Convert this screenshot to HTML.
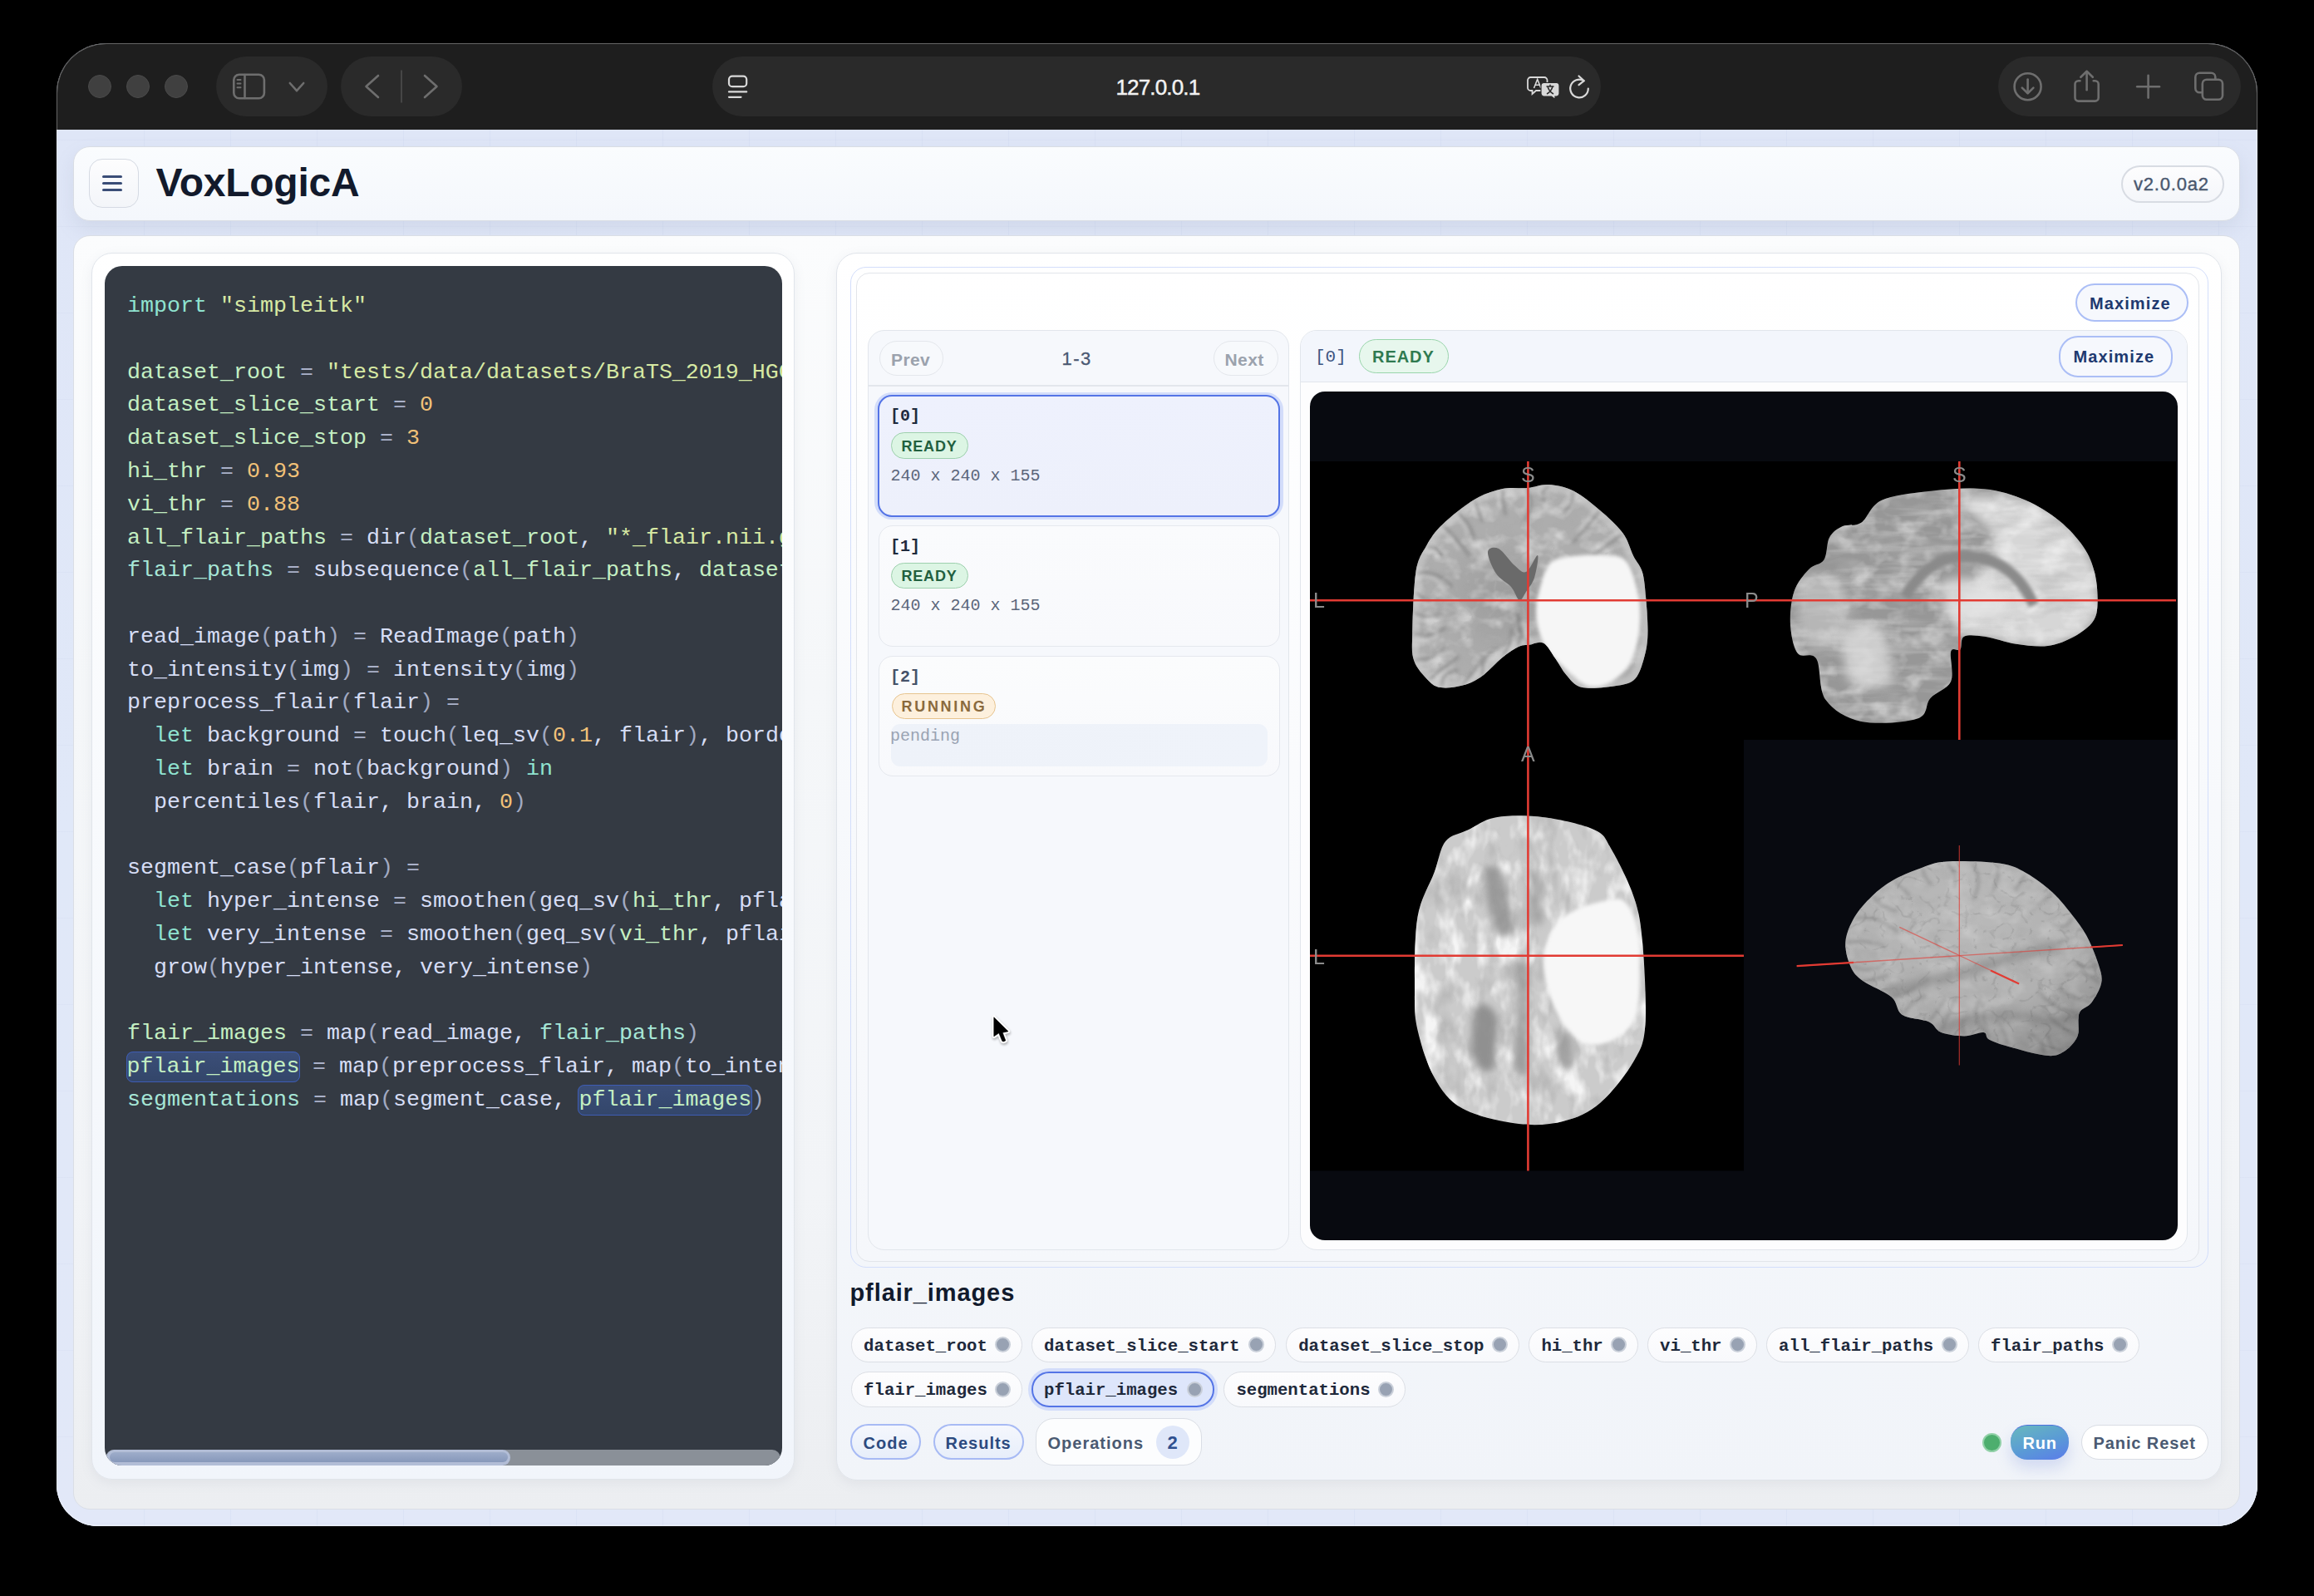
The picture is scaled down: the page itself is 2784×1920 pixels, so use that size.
<!DOCTYPE html>
<html><head><meta charset="utf-8">
<style>
html,body{margin:0;padding:0;}
body{width:2784px;height:1920px;background:#000;position:relative;overflow:hidden;font-family:"Liberation Sans",sans-serif;}
.a{position:absolute;box-sizing:border-box;}
#win{position:absolute;left:68px;top:52px;width:2648px;height:1784px;border-radius:60px 60px 50px 50px;overflow:hidden;background:#dfe6f6;}
#inner{position:absolute;left:-68px;top:-52px;width:2784px;height:1920px;}
#titlebar{position:absolute;left:68px;top:52px;width:2648px;height:104px;background:#1e1e1e;}
#content{position:absolute;left:68px;top:156px;width:2648px;height:1680px;
 background-color:#e0e8f8;background-image:linear-gradient(90deg,rgba(140,160,205,0.08) 1px,transparent 1px),linear-gradient(180deg,rgba(140,160,205,0.06) 1px,transparent 1px),linear-gradient(180deg,#dfe6f7 0%,#e0e8f8 50%,#e2e8f8 100%);background-size:104px 104px,104px 104px,100% 100%;background-position:1px 12px,1px 12px,0 0;}
#winborder{position:absolute;left:68px;top:52px;width:2648px;height:1784px;border-radius:60px 60px 50px 50px;box-sizing:border-box;border:1.8px solid rgba(255,255,255,0.32);pointer-events:none;}
.pill{position:absolute;background:#2a2a2a;border-radius:36px;}
.tl{position:absolute;width:28px;height:28px;border-radius:50%;background:#404040;box-sizing:border-box;border:1px solid #4a4a4a;}
.mono{font-family:"Liberation Mono",monospace;}
.t{position:absolute;white-space:pre;line-height:1;}

#code{position:absolute;left:27px;top:29.2px;font-family:"Liberation Mono",monospace;font-size:26.67px;line-height:39.77px;color:#d4dbf3;}
.cl{height:39.77px;white-space:pre;}
#code .k{color:#8fe3d0}
#code .s{color:#d7e9a3}
#code .n{color:#f1c178}
#code .o{color:#aab1c9}
#code .f{color:#d6ddf5}
#code .p{color:#a2aac2}
#code .v{color:#c4efc2}
#code .tv{color:#a6e6d6}
#code .hl{background:linear-gradient(180deg,#3b4e78,#33466a);border:1.5px solid #3e5cb4;border-radius:8px;margin:0 -1.5px;padding:2px 0 3px;}
</style></head>
<body>
<div id="win"><div id="inner">
  <div id="titlebar"></div>
  <div id="content"></div>
  <!-- traffic lights -->
  <div class="tl" style="left:106px;top:90px"></div>
  <div class="tl" style="left:152px;top:90px"></div>
  <div class="tl" style="left:198px;top:90px"></div>
  <!-- pills -->
  <div class="pill" style="left:260px;top:68px;width:134px;height:72px"></div>
  <div class="pill" style="left:410px;top:68px;width:146px;height:72px"></div>
  <div class="pill" style="left:857px;top:68px;width:1069px;height:72px"></div>
  <div class="pill" style="left:2404px;top:68px;width:292px;height:72px"></div>
  <div class="t" style="left:1342.5px;top:91.5px;font-size:26px;color:#f2f2f2;letter-spacing:-0.85px;-webkit-text-stroke:0.45px #f2f2f2;">127.0.0.1</div>

  <!-- header card -->
  <div class="a" id="hdr" style="left:88px;top:176px;width:2607px;height:90px;border-radius:20px;border:1.5px solid #d9dde4;background:linear-gradient(180deg,#fafcfe,#f4f7fc);box-shadow:0 10px 22px rgba(125,138,165,0.15);"></div>

  <!-- main card -->
  <div class="a" id="main" style="left:88px;top:283px;width:2607px;height:1533px;border-radius:20px;border:1.5px solid #dadee5;background:linear-gradient(180deg,#fbfcfd 0%,#f5f7f9 35%,#f2f4f7 75%,#eceef1 100%);"></div>

  <!-- editor panel -->
  <div class="a" style="left:110px;top:304px;width:846px;height:1476px;border-radius:25px;border:1.5px solid #e1e5eb;background:linear-gradient(180deg,#ffffff 0%,#f8fafd 45%,#f1f5fb 100%);box-shadow:0 4px 14px rgba(120,130,150,0.10);"></div>
  <div class="a" id="editor" style="left:126px;top:320px;width:815px;height:1443px;border-radius:21px;background:#343a43;overflow:hidden;"><div id="code">
<div class="cl"><span class="k">import</span><span class="f"> </span><span class="s">&quot;simpleitk&quot;</span></div>
<div class="cl"></div>
<div class="cl"><span class="v">dataset_root</span><span class="o"> = </span><span class="s">&quot;tests/data/datasets/BraTS_2019_HGG/&quot;</span></div>
<div class="cl"><span class="v">dataset_slice_start</span><span class="o"> = </span><span class="n">0</span></div>
<div class="cl"><span class="v">dataset_slice_stop</span><span class="o"> = </span><span class="n">3</span></div>
<div class="cl"><span class="v">hi_thr</span><span class="o"> = </span><span class="n">0.93</span></div>
<div class="cl"><span class="v">vi_thr</span><span class="o"> = </span><span class="n">0.88</span></div>
<div class="cl"><span class="v">all_flair_paths</span><span class="o"> = </span><span class="f">dir</span><span class="p">(</span><span class="v">dataset_root</span><span class="f">, </span><span class="s">&quot;*_flair.nii.gz&quot;)</span></div>
<div class="cl"><span class="tv">flair_paths</span><span class="o"> = </span><span class="f">subsequence</span><span class="p">(</span><span class="v">all_flair_paths</span><span class="f">, </span><span class="v">dataset_slice_start, dataset_slice_stop)</span></div>
<div class="cl"></div>
<div class="cl"><span class="f">read_image</span><span class="p">(</span><span class="f">path</span><span class="p">)</span><span class="o"> = </span><span class="f">ReadImage</span><span class="p">(</span><span class="f">path</span><span class="p">)</span></div>
<div class="cl"><span class="f">to_intensity</span><span class="p">(</span><span class="f">img</span><span class="p">)</span><span class="o"> = </span><span class="f">intensity</span><span class="p">(</span><span class="f">img</span><span class="p">)</span></div>
<div class="cl"><span class="f">preprocess_flair</span><span class="p">(</span><span class="f">flair</span><span class="p">)</span><span class="o"> =</span></div>
<div class="cl"><span class="f">  </span><span class="k">let</span><span class="f"> background</span><span class="o"> = </span><span class="f">touch</span><span class="p">(</span><span class="f">leq_sv</span><span class="p">(</span><span class="n">0.1</span><span class="f">, flair</span><span class="p">)</span><span class="f">, border)</span></div>
<div class="cl"><span class="f">  </span><span class="k">let</span><span class="f"> brain</span><span class="o"> = </span><span class="f">not</span><span class="p">(</span><span class="f">background</span><span class="p">)</span><span class="f"> </span><span class="k">in</span></div>
<div class="cl"><span class="f">  percentiles</span><span class="p">(</span><span class="f">flair, brain, </span><span class="n">0</span><span class="p">)</span></div>
<div class="cl"></div>
<div class="cl"><span class="f">segment_case</span><span class="p">(</span><span class="f">pflair</span><span class="p">)</span><span class="o"> =</span></div>
<div class="cl"><span class="f">  </span><span class="k">let</span><span class="f"> hyper_intense</span><span class="o"> = </span><span class="f">smoothen</span><span class="p">(</span><span class="f">geq_sv</span><span class="p">(</span><span class="v">hi_thr</span><span class="f">, pflair), 5.0)</span></div>
<div class="cl"><span class="f">  </span><span class="k">let</span><span class="f"> very_intense</span><span class="o"> = </span><span class="f">smoothen</span><span class="p">(</span><span class="f">geq_sv</span><span class="p">(</span><span class="v">vi_thr</span><span class="f">, pflair), 2.0)</span></div>
<div class="cl"><span class="f">  grow</span><span class="p">(</span><span class="f">hyper_intense, very_intense</span><span class="p">)</span></div>
<div class="cl"></div>
<div class="cl"><span class="v">flair_images</span><span class="o"> = </span><span class="f">map</span><span class="p">(</span><span class="f">read_image, </span><span class="tv">flair_paths</span><span class="p">)</span></div>
<div class="cl"><span class="hl v">pflair_images</span><span class="o"> = </span><span class="f">map</span><span class="p">(</span><span class="f">preprocess_flair, map</span><span class="p">(</span><span class="f">to_intensity, flair_images))</span></div>
<div class="cl"><span class="tv">segmentations</span><span class="o"> = </span><span class="f">map</span><span class="p">(</span><span class="f">segment_case, </span><span class="hl v">pflair_images</span><span class="p">)</span></div>
</div>
<div class="a" style="left:1px;top:1424px;width:812px;height:19px;background:#8a9098;border-radius:10px 10px 0 0;"></div>
<div class="a" style="left:2px;top:1423.5px;width:486px;height:19px;background:#b2bdd6;border-radius:10px;"></div>
<div class="a" style="left:5.5px;top:1427px;width:479px;height:12px;background:linear-gradient(180deg,#9eadca,#8798ba);border-radius:6px;"></div>
</div>

  <!-- right card -->
  <div class="a" style="left:1006px;top:304px;width:1667px;height:1477px;border-radius:25px;border:1.5px solid #e0e4ea;background:linear-gradient(180deg,#ffffff 0%,#f7f9fc 45%,#f1f4f9 100%);box-shadow:0 4px 14px rgba(120,130,150,0.10);"></div>
  <div class="a" style="left:1023px;top:321px;width:1634px;height:1204px;border-radius:19px;border:1.5px solid #d3defb;"></div>
  <div class="a" style="left:1030px;top:328px;width:1616px;height:1190px;border-radius:16px;border:1.5px solid #e2e5ea;background:linear-gradient(180deg,#ffffff 0%,#fafbfd 50%,#f5f7fb 100%);"></div>

  <!-- list panel -->
  <div class="a" style="left:1044px;top:397px;width:507px;height:1107px;border-radius:20px;border:1px solid #e2e6ec;background:#f6f8fc;"></div>
  <!-- result panel -->
  <div class="a" style="left:1564px;top:397px;width:1068px;height:1107px;border-radius:20px;border:1px solid #e2e6ec;background:#fdfdfe;"></div>
  <svg class="a" style="left:1576px;top:471px;" width="1044" height="1021" viewBox="1576 471 1044 1021">
<defs>
<filter id="nz" x="1576" y="471" width="1044" height="1021" filterUnits="userSpaceOnUse">
 <feTurbulence type="fractalNoise" baseFrequency="0.035 0.045" numOctaves="3" seed="4"/>
 <feColorMatrix type="matrix" values="0 0 0 0 1  0 0 0 0 1  0 0 0 0 1  2.8 0 0 0 -1.25"/>
</filter>
<filter id="nzd" x="1576" y="471" width="1044" height="1021" filterUnits="userSpaceOnUse">
 <feTurbulence type="fractalNoise" baseFrequency="0.04 0.05" numOctaves="3" seed="11"/>
 <feColorMatrix type="matrix" values="0 0 0 0 0.4  0 0 0 0 0.4  0 0 0 0 0.4  2.6 0 0 0 -1.3"/>
</filter>
<filter id="sul" x="1576" y="471" width="1044" height="1021" filterUnits="userSpaceOnUse">
 <feTurbulence type="turbulence" baseFrequency="0.03" numOctaves="2" seed="21"/>
 <feColorMatrix type="matrix" values="0 0 0 0 0.42  0 0 0 0 0.42  0 0 0 0 0.42  -7 0 0 0 0.95"/>
</filter>
<filter id="gyr" x="1576" y="471" width="1044" height="1021" filterUnits="userSpaceOnUse">
 <feTurbulence type="turbulence" baseFrequency="0.028" numOctaves="2" seed="8"/>
 <feColorMatrix type="matrix" values="0 0 0 0 0.9  0 0 0 0 0.9  0 0 0 0 0.9  -5 0 0 0 0.9"/>
</filter>
<filter id="strH" x="1576" y="471" width="1044" height="1021" filterUnits="userSpaceOnUse">
 <feTurbulence type="fractalNoise" baseFrequency="0.012 0.09" numOctaves="3" seed="5"/>
 <feColorMatrix type="matrix" values="0 0 0 0 1  0 0 0 0 1  0 0 0 0 1  3.2 0 0 0 -1.45"/>
</filter>
<filter id="strHd" x="1576" y="471" width="1044" height="1021" filterUnits="userSpaceOnUse">
 <feTurbulence type="fractalNoise" baseFrequency="0.02 0.05" numOctaves="3" seed="9"/>
 <feColorMatrix type="matrix" values="0 0 0 0 0.45  0 0 0 0 0.45  0 0 0 0 0.45  3.0 0 0 0 -1.5"/>
</filter>
<filter id="strV" x="1576" y="471" width="1044" height="1021" filterUnits="userSpaceOnUse">
 <feTurbulence type="fractalNoise" baseFrequency="0.045 0.025" numOctaves="3" seed="13"/>
 <feColorMatrix type="matrix" values="0 0 0 0 1  0 0 0 0 1  0 0 0 0 1  3.2 0 0 0 -1.4"/>
</filter>
<filter id="strVd" x="1576" y="471" width="1044" height="1021" filterUnits="userSpaceOnUse">
 <feTurbulence type="fractalNoise" baseFrequency="0.04 0.022" numOctaves="3" seed="17"/>
 <feColorMatrix type="matrix" values="0 0 0 0 0.42  0 0 0 0 0.42  0 0 0 0 0.42  3.2 0 0 0 -1.55"/>
</filter>
<filter id="bl2" x="1576" y="471" width="1044" height="1021" filterUnits="userSpaceOnUse"><feGaussianBlur stdDeviation="2"/></filter>
<filter id="bl6" x="1576" y="471" width="1044" height="1021" filterUnits="userSpaceOnUse"><feGaussianBlur stdDeviation="6"/></filter>
<filter id="bl4" x="1576" y="471" width="1044" height="1021" filterUnits="userSpaceOnUse"><feGaussianBlur stdDeviation="4"/></filter>
<filter id="sul2" x="1576" y="471" width="1044" height="1021" filterUnits="userSpaceOnUse">
 <feTurbulence type="turbulence" baseFrequency="0.045 0.05" numOctaves="2" seed="33"/>
 <feColorMatrix type="matrix" values="0 0 0 0 0.38  0 0 0 0 0.38  0 0 0 0 0.38  -9 0 0 0 1.25"/>
</filter>
<radialGradient id="shade3d" cx="0.45" cy="0.3" r="0.75"><stop offset="0" stop-color="#000" stop-opacity="0"/><stop offset="0.6" stop-color="#000" stop-opacity="0.05"/><stop offset="1" stop-color="#000" stop-opacity="0.25"/></radialGradient>
<radialGradient id="wm" cx="0.5" cy="0.5" r="0.5"><stop offset="0" stop-color="#8e8e8e" stop-opacity="0.55"/><stop offset="1" stop-color="#8e8e8e" stop-opacity="0"/></radialGradient>

<clipPath id="cCor"><path d="M1773.7,601.0 C1785.8,593.8 1797.2,590.3 1807.8,588.0 C1818.4,585.7 1828.4,587.8 1837.6,587.0 C1846.8,586.2 1853.8,582.4 1863.0,583.0 C1872.2,583.6 1882.7,585.3 1893.0,590.5 C1903.3,595.7 1915.1,605.5 1925.0,614.0 C1934.9,622.5 1945.9,632.4 1952.6,641.6 C1959.3,650.8 1961.5,661.5 1965.4,669.3 C1969.3,677.1 1973.5,679.9 1976.0,688.4 C1978.5,696.9 1979.2,708.0 1980.3,720.4 C1981.4,732.8 1982.8,751.3 1982.4,763.0 C1982.1,774.7 1980.7,781.8 1978.2,790.7 C1975.7,799.6 1972.8,810.5 1967.5,816.2 C1962.2,821.9 1956.9,823.0 1946.2,824.8 C1935.5,826.6 1913.9,829.1 1903.6,827.0 C1893.3,824.9 1889.8,817.7 1884.5,812.0 C1879.2,806.3 1876.3,799.2 1871.7,792.8 C1867.1,786.4 1862.1,776.4 1856.8,773.6 C1851.5,770.8 1844.7,775.1 1839.7,775.8 C1834.7,776.5 1832.3,775.5 1827.0,778.0 C1821.7,780.5 1815.3,784.7 1807.8,790.7 C1800.3,796.7 1790.4,808.3 1782.2,814.0 C1774.0,819.7 1767.0,822.6 1758.8,824.8 C1750.6,827.0 1740.0,828.1 1733.2,827.0 C1726.5,825.9 1723.6,823.7 1718.3,818.4 C1713.0,813.1 1704.5,804.2 1701.3,795.0 C1698.1,785.8 1698.8,780.8 1699.2,763.0 C1699.6,745.2 1700.6,706.1 1703.4,688.4 C1706.2,670.6 1710.9,666.1 1716.2,656.5 C1721.5,646.9 1725.8,640.2 1735.4,631.0 C1745.0,621.8 1761.6,608.2 1773.7,601.0 Z"/></clipPath>
<clipPath id="cSag"><path d="M2239.3,628.7 C2247.2,623.5 2249.8,608.1 2264.0,601.7 C2278.2,595.3 2304.1,592.6 2324.7,590.4 C2345.3,588.1 2368.9,586.3 2387.6,588.2 C2406.3,590.1 2422.0,595.3 2437.0,601.7 C2452.0,608.1 2465.9,617.0 2477.5,626.4 C2489.1,635.8 2499.6,647.4 2506.7,657.9 C2513.8,668.4 2517.4,678.1 2520.2,689.3 C2523.0,700.5 2524.0,715.5 2523.6,725.3 C2523.2,735.0 2522.7,741.1 2518.0,747.8 C2513.3,754.5 2504.5,760.8 2495.5,765.7 C2486.5,770.6 2475.6,775.5 2464.0,777.0 C2452.4,778.5 2438.5,776.6 2425.8,774.7 C2413.1,772.8 2398.1,767.2 2387.6,765.7 C2377.1,764.2 2367.9,763.1 2363.0,765.7 C2358.1,768.3 2361.0,778.5 2358.4,781.5 C2355.8,784.5 2349.1,777.3 2347.2,783.7 C2345.3,790.1 2351.3,810.3 2347.2,819.7 C2343.1,829.1 2329.2,832.4 2322.5,839.9 C2315.8,847.4 2320.6,859.9 2306.7,864.6 C2292.8,869.3 2257.7,871.8 2239.3,868.0 C2221.0,864.2 2205.6,854.6 2196.6,842.1 C2187.6,829.6 2191.0,802.1 2185.4,792.7 C2179.8,783.4 2168.1,792.8 2162.9,786.0 C2157.7,779.2 2154.8,764.6 2154.0,752.2 C2153.2,739.8 2154.7,723.0 2158.4,711.8 C2162.1,700.6 2170.4,691.2 2176.4,684.8 C2182.4,678.4 2190.3,680.0 2194.4,673.6 C2198.5,667.2 2197.3,653.4 2201.1,646.6 C2204.8,639.9 2210.5,636.1 2216.9,633.1 C2223.3,630.1 2231.5,633.9 2239.3,628.7 Z"/></clipPath>
<clipPath id="cAx"><path d="M1800.1,983.2 C1815.3,980.7 1837.8,980.7 1857.6,983.2 C1877.3,985.7 1905.0,991.9 1918.6,998.4 C1932.1,1004.9 1931.0,1008.5 1938.9,1022.1 C1946.8,1035.7 1959.7,1061.1 1965.9,1079.7 C1972.1,1098.3 1973.8,1108.4 1976.1,1133.8 C1978.4,1159.2 1981.2,1208.3 1979.5,1232.0 C1977.8,1255.7 1975.0,1260.2 1966.0,1276.0 C1957.0,1291.8 1939.4,1314.6 1925.3,1326.7 C1911.2,1338.8 1897.6,1344.5 1881.3,1348.7 C1865.0,1352.9 1847.5,1354.5 1827.2,1352.0 C1806.9,1349.5 1776.4,1342.8 1759.5,1333.5 C1742.6,1324.2 1734.7,1312.0 1725.7,1296.2 C1716.7,1280.4 1709.4,1256.2 1705.4,1238.7 C1701.5,1221.2 1702.0,1213.8 1702.0,1191.3 C1702.0,1168.8 1701.5,1127.1 1705.4,1103.4 C1709.4,1079.7 1720.1,1064.4 1725.7,1049.2 C1731.3,1034.0 1732.4,1020.5 1739.2,1012.0 C1746.0,1003.5 1756.2,1003.2 1766.3,998.4 C1776.4,993.6 1784.9,985.7 1800.1,983.2 Z"/></clipPath>
<clipPath id="c3d"><path d="M2341.8,1036.5 C2357.4,1035.6 2389.7,1036.3 2405.7,1038.6 C2421.7,1040.9 2427.0,1044.4 2437.7,1050.3 C2448.3,1056.2 2460.0,1064.9 2469.6,1073.8 C2479.2,1082.7 2488.1,1094.4 2495.2,1103.6 C2502.3,1112.8 2507.2,1119.6 2512.2,1129.2 C2517.2,1138.8 2522.3,1152.2 2525.0,1161.1 C2527.7,1170.0 2529.6,1174.9 2528.2,1182.4 C2526.8,1189.9 2520.9,1199.9 2516.5,1205.9 C2512.1,1212.0 2504.4,1212.0 2501.6,1218.7 C2498.8,1225.5 2502.7,1238.6 2499.5,1246.4 C2496.3,1254.2 2488.8,1261.6 2482.4,1265.5 C2476.0,1269.4 2472.1,1270.9 2461.1,1269.8 C2450.1,1268.7 2427.8,1262.3 2416.4,1259.1 C2405.0,1255.9 2397.9,1253.4 2392.9,1250.6 C2387.9,1247.8 2391.5,1242.8 2386.5,1242.1 C2381.5,1241.4 2371.6,1246.4 2363.1,1246.4 C2354.6,1246.4 2342.5,1244.9 2335.4,1242.1 C2328.3,1239.2 2328.3,1232.8 2320.5,1229.3 C2312.7,1225.8 2296.0,1225.8 2288.5,1220.8 C2281.0,1215.8 2283.5,1206.2 2275.7,1199.5 C2267.9,1192.8 2249.8,1186.3 2241.6,1180.3 C2233.4,1174.2 2230.2,1171.0 2226.7,1163.2 C2223.1,1155.4 2219.6,1143.3 2220.3,1133.4 C2221.0,1123.5 2225.7,1112.8 2231.0,1103.6 C2236.3,1094.4 2244.5,1085.5 2252.3,1078.0 C2260.1,1070.5 2267.9,1064.5 2277.8,1058.8 C2287.7,1053.1 2301.2,1047.6 2311.9,1043.9 C2322.6,1040.2 2326.2,1037.4 2341.8,1036.5 Z"/></clipPath>
<clipPath id="vclip"><rect x="1576" y="471" width="1044" height="1021" rx="18"/></clipPath>
</defs>
<g clip-path="url(#vclip)">
<rect x="1576" y="471" width="1044" height="1021" fill="#080a10"/>
<rect x="1576" y="555" width="1042" height="335" fill="#000"/>
<rect x="1576" y="890" width="522" height="518.5" fill="#000"/>
<g clip-path="url(#cCor)">
<rect x="1690" y="575" width="300" height="260" fill="#adadad"/>
<ellipse cx="1810" cy="720" rx="90" ry="80" fill="url(#wm)"/>
<rect x="1690" y="575" width="300" height="260" filter="url(#nz)" opacity="0.45"/>
<rect x="1690" y="575" width="300" height="260" filter="url(#sul)" opacity="0.55"/>
<rect x="1690" y="575" width="300" height="260" filter="url(#nzd)" opacity="0.3"/>
<path d="M1773.7,601.0 C1785.8,593.8 1797.2,590.3 1807.8,588.0 C1818.4,585.7 1828.4,587.8 1837.6,587.0 C1846.8,586.2 1853.8,582.4 1863.0,583.0 C1872.2,583.6 1882.7,585.3 1893.0,590.5 C1903.3,595.7 1915.1,605.5 1925.0,614.0 C1934.9,622.5 1945.9,632.4 1952.6,641.6 C1959.3,650.8 1961.5,661.5 1965.4,669.3 C1969.3,677.1 1973.5,679.9 1976.0,688.4 C1978.5,696.9 1979.2,708.0 1980.3,720.4 C1981.4,732.8 1982.8,751.3 1982.4,763.0 C1982.1,774.7 1980.7,781.8 1978.2,790.7 C1975.7,799.6 1972.8,810.5 1967.5,816.2 C1962.2,821.9 1956.9,823.0 1946.2,824.8 C1935.5,826.6 1913.9,829.1 1903.6,827.0 C1893.3,824.9 1889.8,817.7 1884.5,812.0 C1879.2,806.3 1876.3,799.2 1871.7,792.8 C1867.1,786.4 1862.1,776.4 1856.8,773.6 C1851.5,770.8 1844.7,775.1 1839.7,775.8 C1834.7,776.5 1832.3,775.5 1827.0,778.0 C1821.7,780.5 1815.3,784.7 1807.8,790.7 C1800.3,796.7 1790.4,808.3 1782.2,814.0 C1774.0,819.7 1767.0,822.6 1758.8,824.8 C1750.6,827.0 1740.0,828.1 1733.2,827.0 C1726.5,825.9 1723.6,823.7 1718.3,818.4 C1713.0,813.1 1704.5,804.2 1701.3,795.0 C1698.1,785.8 1698.8,780.8 1699.2,763.0 C1699.6,745.2 1700.6,706.1 1703.4,688.4 C1706.2,670.6 1710.9,666.1 1716.2,656.5 C1721.5,646.9 1725.8,640.2 1735.4,631.0 C1745.0,621.8 1761.6,608.2 1773.7,601.0 Z" fill="none" stroke="#cdcdcd" stroke-width="16" opacity="0.55" filter="url(#bl2)"/>
<g filter="url(#bl2)" opacity="0.9"><path d="M1774.8,603.8 Q1777.9,615.5 1783.4,626.3" stroke="#7a7a7a" stroke-width="2.2" fill="none" stroke-linecap="round"/><path d="M1770.1,605.6 Q1773.3,617.3 1776.1,621.4" stroke="#d6d6d6" stroke-width="3" fill="none" stroke-linecap="round" opacity="0.7"/><path d="M1808.1,591.0 Q1806.9,605.3 1811.4,618.9" stroke="#7a7a7a" stroke-width="2.2" fill="none" stroke-linecap="round"/><path d="M1803.2,591.6 Q1801.9,605.9 1805.5,611.1" stroke="#d6d6d6" stroke-width="3" fill="none" stroke-linecap="round" opacity="0.7"/><path d="M1837.3,590.0 Q1847.9,608.8 1834.3,625.6" stroke="#7a7a7a" stroke-width="2.2" fill="none" stroke-linecap="round"/><path d="M1832.4,589.6 Q1843.0,608.4 1830.2,614.5" stroke="#d6d6d6" stroke-width="3" fill="none" stroke-linecap="round" opacity="0.7"/><path d="M1862.3,585.9 Q1851.0,592.1 1858.1,602.8" stroke="#7a7a7a" stroke-width="2.2" fill="none" stroke-linecap="round"/><path d="M1857.4,584.7 Q1846.1,590.8 1854.5,596.5" stroke="#d6d6d6" stroke-width="3" fill="none" stroke-linecap="round" opacity="0.7"/><path d="M1891.7,593.2 Q1893.2,607.6 1881.2,615.6" stroke="#7a7a7a" stroke-width="2.2" fill="none" stroke-linecap="round"/><path d="M1887.2,591.1 Q1888.7,605.5 1879.8,606.8" stroke="#d6d6d6" stroke-width="3" fill="none" stroke-linecap="round" opacity="0.7"/><path d="M1923.1,616.3 Q1908.8,634.9 1893.2,652.4" stroke="#7a7a7a" stroke-width="2.2" fill="none" stroke-linecap="round"/><path d="M1919.2,613.1 Q1904.9,631.7 1898.3,638.4" stroke="#d6d6d6" stroke-width="3" fill="none" stroke-linecap="round" opacity="0.7"/><path d="M1950.2,643.4 Q1933.6,656.3 1916.2,668.2" stroke="#7a7a7a" stroke-width="2.2" fill="none" stroke-linecap="round"/><path d="M1947.2,639.3 Q1930.6,652.3 1923.4,656.7" stroke="#d6d6d6" stroke-width="3" fill="none" stroke-linecap="round" opacity="0.7"/><path d="M1838.7,773.0 Q1823.3,759.3 1826.4,738.9" stroke="#7a7a7a" stroke-width="2.2" fill="none" stroke-linecap="round"/><path d="M1843.4,771.3 Q1828.1,757.6 1834.8,747.5" stroke="#d6d6d6" stroke-width="3" fill="none" stroke-linecap="round" opacity="0.7"/><path d="M1826.9,775.0 Q1836.3,756.5 1825.2,739.0" stroke="#7a7a7a" stroke-width="2.2" fill="none" stroke-linecap="round"/><path d="M1831.9,774.8 Q1841.3,756.3 1830.7,749.6" stroke="#d6d6d6" stroke-width="3" fill="none" stroke-linecap="round" opacity="0.7"/><path d="M1808.7,787.8 Q1820.0,774.2 1818.3,756.6" stroke="#7a7a7a" stroke-width="2.2" fill="none" stroke-linecap="round"/><path d="M1813.5,789.3 Q1824.7,775.7 1820.2,767.4" stroke="#d6d6d6" stroke-width="3" fill="none" stroke-linecap="round" opacity="0.7"/><path d="M1783.6,811.4 Q1781.7,789.2 1801.3,778.7" stroke="#7a7a7a" stroke-width="2.2" fill="none" stroke-linecap="round"/><path d="M1788.0,813.7 Q1786.1,791.6 1800.4,790.9" stroke="#d6d6d6" stroke-width="3" fill="none" stroke-linecap="round" opacity="0.7"/><path d="M1760.6,822.4 Q1774.4,807.9 1784.2,790.4" stroke="#7a7a7a" stroke-width="2.2" fill="none" stroke-linecap="round"/><path d="M1764.6,825.4 Q1778.5,810.9 1781.1,803.0" stroke="#d6d6d6" stroke-width="3" fill="none" stroke-linecap="round" opacity="0.7"/><path d="M1735.3,824.9 Q1735.2,806.4 1753.7,806.4" stroke="#7a7a7a" stroke-width="2.2" fill="none" stroke-linecap="round"/><path d="M1738.9,828.4 Q1738.8,809.9 1751.7,815.5" stroke="#d6d6d6" stroke-width="3" fill="none" stroke-linecap="round" opacity="0.7"/><path d="M1720.7,816.6 Q1737.1,802.7 1754.5,790.1" stroke="#7a7a7a" stroke-width="2.2" fill="none" stroke-linecap="round"/><path d="M1723.7,820.5 Q1740.2,806.7 1747.4,802.0" stroke="#d6d6d6" stroke-width="3" fill="none" stroke-linecap="round" opacity="0.7"/><path d="M1704.0,793.7 Q1726.0,794.8 1738.7,776.9" stroke="#7a7a7a" stroke-width="2.2" fill="none" stroke-linecap="round"/><path d="M1706.2,798.2 Q1728.2,799.3 1730.5,786.4" stroke="#d6d6d6" stroke-width="3" fill="none" stroke-linecap="round" opacity="0.7"/><path d="M1702.1,762.3 Q1723.4,769.7 1739.6,754.0" stroke="#7a7a7a" stroke-width="2.2" fill="none" stroke-linecap="round"/><path d="M1703.2,767.2 Q1724.5,774.6 1729.5,761.4" stroke="#d6d6d6" stroke-width="3" fill="none" stroke-linecap="round" opacity="0.7"/><path d="M1703.6,738.1 Q1718.2,746.1 1732.4,737.3" stroke="#7a7a7a" stroke-width="2.2" fill="none" stroke-linecap="round"/><path d="M1703.7,743.1 Q1718.4,751.1 1723.9,742.5" stroke="#d6d6d6" stroke-width="3" fill="none" stroke-linecap="round" opacity="0.7"/><path d="M1705.0,713.8 Q1717.8,728.4 1734.8,719.1" stroke="#7a7a7a" stroke-width="2.2" fill="none" stroke-linecap="round"/><path d="M1704.1,718.7 Q1716.9,733.4 1725.0,722.4" stroke="#d6d6d6" stroke-width="3" fill="none" stroke-linecap="round" opacity="0.7"/><path d="M1706.2,689.5 Q1730.5,686.7 1746.7,705.0" stroke="#7a7a7a" stroke-width="2.2" fill="none" stroke-linecap="round"/><path d="M1704.4,694.1 Q1728.7,691.4 1732.8,705.0" stroke="#d6d6d6" stroke-width="3" fill="none" stroke-linecap="round" opacity="0.7"/><path d="M1718.6,658.3 Q1731.8,658.0 1735.7,670.6" stroke="#7a7a7a" stroke-width="2.2" fill="none" stroke-linecap="round"/><path d="M1715.7,662.3 Q1728.9,662.1 1727.7,670.9" stroke="#d6d6d6" stroke-width="3" fill="none" stroke-linecap="round" opacity="0.7"/><path d="M1737.4,633.3 Q1753.7,649.5 1767.4,668.1" stroke="#7a7a7a" stroke-width="2.2" fill="none" stroke-linecap="round"/><path d="M1733.6,636.5 Q1749.9,652.8 1754.6,660.9" stroke="#d6d6d6" stroke-width="3" fill="none" stroke-linecap="round" opacity="0.7"/><path d="M1756.1,618.6 Q1770.0,631.1 1774.3,649.4" stroke="#7a7a7a" stroke-width="2.2" fill="none" stroke-linecap="round"/><path d="M1751.8,621.1 Q1765.7,633.7 1764.5,642.7" stroke="#d6d6d6" stroke-width="3" fill="none" stroke-linecap="round" opacity="0.7"/></g>
<path d="M1790.0,664.0 C1790.5,659.0 1797.7,657.3 1803.0,660.0 C1808.3,662.7 1816.5,675.3 1822.0,680.0 C1827.5,684.7 1831.3,690.0 1836.0,688.0 C1840.7,686.0 1848.3,666.8 1850.0,668.0 C1851.7,669.2 1848.3,687.7 1846.0,695.0 C1843.7,702.3 1839.0,707.5 1836.0,712.0 C1833.0,716.5 1831.0,723.0 1828.0,722.0 C1825.0,721.0 1822.7,711.3 1818.0,706.0 C1813.3,700.7 1804.7,697.0 1800.0,690.0 C1795.3,683.0 1789.5,669.0 1790.0,664.0 Z" fill="#6a6a6a"/>
<path d="M1865.3,677.8 C1872.1,671.0 1882.2,670.6 1893.0,669.0 C1903.8,667.4 1919.3,666.9 1930.0,668.0 C1940.7,669.1 1950.0,667.0 1957.0,675.7 C1964.0,684.4 1969.3,705.9 1971.8,720.4 C1974.3,734.9 1973.8,749.7 1971.8,763.0 C1969.8,776.3 1966.1,790.2 1960.0,800.0 C1953.9,809.8 1943.3,817.8 1935.0,822.0 C1926.7,826.2 1918.4,827.7 1910.0,825.0 C1901.6,822.3 1893.2,813.9 1884.5,805.6 C1875.8,797.3 1864.0,785.6 1858.0,775.0 C1852.0,764.4 1849.3,752.5 1848.3,741.7 C1847.3,730.9 1849.2,720.6 1852.0,710.0 C1854.8,699.4 1858.5,684.6 1865.3,677.8 Z" fill="#f6f6f6" filter="url(#bl2)"/>
</g>
<g clip-path="url(#cSag)">
<rect x="2150" y="580" width="380" height="295" fill="#979797"/>
<path d="M2360.0,600.0 C2366.2,592.0 2417.4,597.3 2437.0,601.7 C2456.6,606.1 2465.9,617.0 2477.5,626.4 C2489.1,635.8 2499.6,647.4 2506.7,657.9 C2513.8,668.4 2517.4,678.1 2520.2,689.3 C2523.0,700.5 2524.0,715.5 2523.6,725.3 C2523.2,735.0 2522.7,741.1 2518.0,747.8 C2513.3,754.5 2504.5,760.8 2495.5,765.7 C2486.5,770.6 2475.6,775.5 2464.0,777.0 C2452.4,778.5 2438.5,776.6 2425.8,774.7 C2413.1,772.8 2398.6,768.2 2387.6,765.7 C2376.6,763.2 2367.1,765.1 2360.0,760.0 C2352.9,754.9 2341.7,745.0 2345.0,735.0 C2348.3,725.0 2370.8,714.2 2380.0,700.0 C2389.2,685.8 2403.3,666.7 2400.0,650.0 C2396.7,633.3 2353.8,608.0 2360.0,600.0 Z" fill="#d6d6d6" filter="url(#bl6)"/>
<rect x="2150" y="580" width="380" height="295" filter="url(#nz)" opacity="0.42"/>
<rect x="2150" y="580" width="380" height="295" filter="url(#strHd)" opacity="0.5"/>
<rect x="2150" y="580" width="380" height="295" filter="url(#strH)" opacity="0.22"/>
<path d="M2160,700 Q2185,680 2215,700 L2225,760 Q2195,790 2165,770 Z" fill="#d0d0d0" opacity="0.55" filter="url(#bl6)"/>
<path d="M2215,765 Q2240,740 2268,758 L2278,820 Q2250,838 2222,818 Z" fill="#dedede" opacity="0.75" filter="url(#bl6)"/>
<path d="M2335,700 Q2365,690 2395,700 Q2420,715 2415,742 L2340,742 Z" fill="#e2e2e2" opacity="0.8" filter="url(#bl6)"/>
<path d="M2292,718 Q2318,672 2360,669 Q2420,668 2447,728" fill="none" stroke="#8a8a8a" stroke-width="13" filter="url(#bl2)"/>
</g>
<g clip-path="url(#cAx)">
<rect x="1695" y="975" width="290" height="385" fill="#cbcbcb"/>
<rect x="1695" y="975" width="290" height="385" filter="url(#strV)" opacity="0.8"/>
<rect x="1695" y="975" width="290" height="385" filter="url(#strVd)" opacity="0.62"/>
<path d="M1785,1045 Q1800,1035 1812,1055 L1822,1115 Q1815,1135 1800,1120 L1790,1090 Z" fill="#8c8c8c" opacity="0.8" filter="url(#bl4)"/>
<path d="M1842,1050 Q1852,1040 1858,1060 L1856,1110 Q1848,1120 1842,1100 Z" fill="#8e8e8e" opacity="0.65" filter="url(#bl4)"/>
<path d="M1772,1215 Q1790,1198 1802,1225 L1798,1285 Q1782,1298 1770,1268 Z" fill="#8a8a8a" opacity="0.9" filter="url(#bl4)"/>
<path d="M1825,1160 Q1835,1150 1840,1175 L1838,1290 Q1828,1300 1822,1280 Z" fill="#909090" opacity="0.75" filter="url(#bl4)"/>
<path d="M1872,1240 Q1880,1230 1890,1250 L1892,1285 Q1882,1295 1874,1275 Z" fill="#8e8e8e" opacity="0.65" filter="url(#bl4)"/>
<path d="M1891.5,1096.6 C1900.7,1091.6 1914.8,1087.3 1925.0,1085.0 C1935.2,1082.7 1945.2,1078.8 1952.4,1083.0 C1959.6,1087.2 1964.6,1098.7 1968.0,1110.0 C1971.4,1121.3 1972.5,1132.6 1972.7,1150.7 C1972.9,1168.8 1973.9,1202.0 1969.3,1218.4 C1964.7,1234.8 1955.2,1242.7 1945.0,1248.9 C1934.8,1255.1 1919.2,1258.8 1908.4,1255.6 C1897.6,1252.4 1887.7,1240.9 1880.0,1230.0 C1872.3,1219.1 1865.7,1203.3 1862.0,1190.0 C1858.3,1176.7 1856.3,1162.5 1857.6,1150.0 C1858.9,1137.5 1864.3,1123.9 1870.0,1115.0 C1875.7,1106.1 1882.3,1101.6 1891.5,1096.6 Z" fill="#f7f7f7" filter="url(#bl2)"/>
</g>
<g clip-path="url(#c3d)">
<rect x="2215" y="1030" width="320" height="245" fill="#bababa"/>
<rect x="2215" y="1030" width="320" height="245" filter="url(#sul2)" opacity="0.8"/>
<g filter="url(#bl2)" opacity="0.6"><path d="M2342.6,1039.4 Q2356.2,1050.9 2351.0,1067.9" stroke="#848484" stroke-width="3.2" fill="none" stroke-linecap="round"/><path d="M2337.8,1040.8 Q2351.4,1052.3 2343.7,1060.7" stroke="#c6c6c6" stroke-width="3" fill="none" stroke-linecap="round" opacity="0.7"/><path d="M2373.8,1040.5 Q2386.0,1060.7 2374.2,1081.0" stroke="#848484" stroke-width="3.2" fill="none" stroke-linecap="round"/><path d="M2368.8,1040.6 Q2381.0,1060.7 2369.1,1068.9" stroke="#c6c6c6" stroke-width="3" fill="none" stroke-linecap="round" opacity="0.7"/><path d="M2404.9,1041.5 Q2403.7,1060.2 2395.2,1076.9" stroke="#848484" stroke-width="3.2" fill="none" stroke-linecap="round"/><path d="M2400.1,1040.2 Q2398.8,1058.8 2393.3,1064.9" stroke="#c6c6c6" stroke-width="3" fill="none" stroke-linecap="round" opacity="0.7"/><path d="M2436.1,1052.8 Q2430.4,1061.6 2425.0,1070.5" stroke="#848484" stroke-width="3.2" fill="none" stroke-linecap="round"/><path d="M2431.9,1050.2 Q2426.1,1058.9 2424.1,1062.6" stroke="#c6c6c6" stroke-width="3" fill="none" stroke-linecap="round" opacity="0.7"/><path d="M2467.3,1075.7 Q2460.5,1083.5 2451.5,1088.4" stroke="#848484" stroke-width="3.2" fill="none" stroke-linecap="round"/><path d="M2464.1,1071.8 Q2457.4,1079.6 2453.1,1080.7" stroke="#c6c6c6" stroke-width="3" fill="none" stroke-linecap="round" opacity="0.7"/><path d="M2492.4,1104.7 Q2486.6,1119.2 2472.5,1112.4" stroke="#848484" stroke-width="3.2" fill="none" stroke-linecap="round"/><path d="M2490.6,1100.0 Q2484.8,1114.5 2476.7,1105.4" stroke="#c6c6c6" stroke-width="3" fill="none" stroke-linecap="round" opacity="0.7"/><path d="M2509.2,1129.6 Q2491.5,1123.1 2476.6,1134.6" stroke="#848484" stroke-width="3.2" fill="none" stroke-linecap="round"/><path d="M2508.5,1124.7 Q2490.8,1118.1 2485.6,1128.2" stroke="#c6c6c6" stroke-width="3" fill="none" stroke-linecap="round" opacity="0.7"/><path d="M2522.0,1160.9 Q2509.9,1167.8 2499.0,1159.2" stroke="#848484" stroke-width="3.2" fill="none" stroke-linecap="round"/><path d="M2522.4,1155.9 Q2510.3,1162.8 2506.3,1154.7" stroke="#c6c6c6" stroke-width="3" fill="none" stroke-linecap="round" opacity="0.7"/><path d="M2525.3,1181.8 Q2508.4,1165.4 2486.4,1173.6" stroke="#848484" stroke-width="3.2" fill="none" stroke-linecap="round"/><path d="M2526.3,1176.9 Q2509.5,1160.5 2499.1,1171.1" stroke="#c6c6c6" stroke-width="3" fill="none" stroke-linecap="round" opacity="0.7"/><path d="M2513.7,1204.8 Q2495.0,1200.5 2478.3,1190.8" stroke="#848484" stroke-width="3.2" fill="none" stroke-linecap="round"/><path d="M2515.5,1200.1 Q2496.8,1195.8 2490.8,1190.4" stroke="#c6c6c6" stroke-width="3" fill="none" stroke-linecap="round" opacity="0.7"/><path d="M2499.0,1217.3 Q2470.4,1216.2 2453.9,1192.8" stroke="#848484" stroke-width="3.2" fill="none" stroke-linecap="round"/><path d="M2501.3,1212.9 Q2472.8,1211.8 2469.8,1195.8" stroke="#c6c6c6" stroke-width="3" fill="none" stroke-linecap="round" opacity="0.7"/><path d="M2497.1,1244.6 Q2474.8,1234.7 2459.7,1215.6" stroke="#848484" stroke-width="3.2" fill="none" stroke-linecap="round"/><path d="M2500.2,1240.6 Q2477.9,1230.8 2474.0,1220.3" stroke="#c6c6c6" stroke-width="3" fill="none" stroke-linecap="round" opacity="0.7"/><path d="M2480.4,1263.3 Q2464.4,1261.9 2464.2,1245.9" stroke="#848484" stroke-width="3.2" fill="none" stroke-linecap="round"/><path d="M2484.0,1259.9 Q2468.1,1258.5 2472.7,1247.7" stroke="#c6c6c6" stroke-width="3" fill="none" stroke-linecap="round" opacity="0.7"/><path d="M2459.3,1267.4 Q2458.0,1250.4 2442.3,1243.7" stroke="#848484" stroke-width="3.2" fill="none" stroke-linecap="round"/><path d="M2463.4,1264.4 Q2462.1,1247.4 2451.5,1247.9" stroke="#c6c6c6" stroke-width="3" fill="none" stroke-linecap="round" opacity="0.7"/><path d="M2415.3,1256.3 Q2413.0,1243.8 2406.5,1233.0" stroke="#848484" stroke-width="3.2" fill="none" stroke-linecap="round"/><path d="M2420.0,1254.5 Q2417.7,1242.0 2413.8,1238.2" stroke="#c6c6c6" stroke-width="3" fill="none" stroke-linecap="round" opacity="0.7"/><path d="M2392.4,1247.6 Q2385.3,1228.5 2385.4,1208.2" stroke="#848484" stroke-width="3.2" fill="none" stroke-linecap="round"/><path d="M2397.3,1246.8 Q2390.3,1227.7 2392.4,1219.1" stroke="#c6c6c6" stroke-width="3" fill="none" stroke-linecap="round" opacity="0.7"/><path d="M2386.1,1239.1 Q2371.7,1222.2 2381.5,1202.3" stroke="#848484" stroke-width="3.2" fill="none" stroke-linecap="round"/><path d="M2391.1,1238.5 Q2376.6,1221.6 2387.9,1212.8" stroke="#c6c6c6" stroke-width="3" fill="none" stroke-linecap="round" opacity="0.7"/><path d="M2363.5,1243.4 Q2356.6,1232.0 2366.0,1222.6" stroke="#848484" stroke-width="3.2" fill="none" stroke-linecap="round"/><path d="M2368.4,1244.0 Q2361.5,1232.6 2370.2,1229.5" stroke="#c6c6c6" stroke-width="3" fill="none" stroke-linecap="round" opacity="0.7"/><path d="M2336.6,1239.3 Q2342.9,1219.5 2353.0,1201.3" stroke="#848484" stroke-width="3.2" fill="none" stroke-linecap="round"/><path d="M2341.2,1241.3 Q2347.5,1221.5 2352.6,1214.7" stroke="#c6c6c6" stroke-width="3" fill="none" stroke-linecap="round" opacity="0.7"/><path d="M2322.2,1226.8 Q2332.5,1216.1 2338.8,1202.6" stroke="#848484" stroke-width="3.2" fill="none" stroke-linecap="round"/><path d="M2326.3,1229.7 Q2336.6,1218.9 2338.0,1212.7" stroke="#c6c6c6" stroke-width="3" fill="none" stroke-linecap="round" opacity="0.7"/><path d="M2290.8,1218.9 Q2300.4,1203.8 2317.1,1197.4" stroke="#848484" stroke-width="3.2" fill="none" stroke-linecap="round"/><path d="M2294.0,1222.8 Q2303.6,1207.7 2312.4,1207.7" stroke="#c6c6c6" stroke-width="3" fill="none" stroke-linecap="round" opacity="0.7"/><path d="M2278.4,1198.2 Q2301.1,1193.1 2318.9,1178.0" stroke="#848484" stroke-width="3.2" fill="none" stroke-linecap="round"/><path d="M2280.6,1202.6 Q2303.3,1197.5 2308.9,1188.5" stroke="#c6c6c6" stroke-width="3" fill="none" stroke-linecap="round" opacity="0.7"/><path d="M2244.5,1179.6 Q2258.2,1178.7 2270.9,1173.6" stroke="#848484" stroke-width="3.2" fill="none" stroke-linecap="round"/><path d="M2245.6,1184.5 Q2259.3,1183.5 2264.1,1180.3" stroke="#c6c6c6" stroke-width="3" fill="none" stroke-linecap="round" opacity="0.7"/><path d="M2229.7,1162.9 Q2248.7,1171.8 2265.9,1159.7" stroke="#848484" stroke-width="3.2" fill="none" stroke-linecap="round"/><path d="M2230.1,1167.9 Q2249.2,1176.8 2255.5,1165.7" stroke="#c6c6c6" stroke-width="3" fill="none" stroke-linecap="round" opacity="0.7"/><path d="M2223.3,1133.7 Q2245.3,1130.1 2266.1,1138.3" stroke="#848484" stroke-width="3.2" fill="none" stroke-linecap="round"/><path d="M2222.7,1138.7 Q2244.8,1135.1 2252.7,1141.9" stroke="#c6c6c6" stroke-width="3" fill="none" stroke-linecap="round" opacity="0.7"/><path d="M2233.9,1104.5 Q2261.6,1102.2 2282.7,1120.3" stroke="#848484" stroke-width="3.2" fill="none" stroke-linecap="round"/><path d="M2232.3,1109.3 Q2260.0,1107.0 2266.5,1120.3" stroke="#c6c6c6" stroke-width="3" fill="none" stroke-linecap="round" opacity="0.7"/><path d="M2254.9,1079.5 Q2265.4,1094.0 2283.2,1096.1" stroke="#848484" stroke-width="3.2" fill="none" stroke-linecap="round"/><path d="M2252.4,1083.8 Q2262.9,1098.3 2272.2,1095.5" stroke="#c6c6c6" stroke-width="3" fill="none" stroke-linecap="round" opacity="0.7"/><path d="M2280.0,1060.9 Q2289.0,1068.8 2297.5,1077.3" stroke="#848484" stroke-width="3.2" fill="none" stroke-linecap="round"/><path d="M2276.6,1064.5 Q2285.5,1072.5 2288.8,1076.0" stroke="#c6c6c6" stroke-width="3" fill="none" stroke-linecap="round" opacity="0.7"/><path d="M2313.4,1046.5 Q2314.6,1057.6 2323.8,1063.9" stroke="#848484" stroke-width="3.2" fill="none" stroke-linecap="round"/><path d="M2309.1,1049.0 Q2310.3,1060.2 2316.4,1061.2" stroke="#c6c6c6" stroke-width="3" fill="none" stroke-linecap="round" opacity="0.7"/></g>
<rect x="2215" y="1030" width="320" height="245" filter="url(#nzd)" opacity="0.4"/>
<rect x="2215" y="1030" width="320" height="245" filter="url(#nz)" opacity="0.2"/>
<path d="M2270,1195 Q2320,1180 2370,1168 Q2420,1150 2475,1138" fill="none" stroke="#7e7e7e" stroke-width="14" opacity="0.45" filter="url(#bl4)"/>
<path d="M2330,1240 Q2390,1215 2440,1224 Q2480,1234 2505,1218" fill="none" stroke="#808080" stroke-width="9" opacity="0.45" filter="url(#bl4)"/>
<rect x="2215" y="1030" width="320" height="245" fill="url(#shade3d)"/>
</g>
<g stroke="#e23b33" stroke-width="2.6">
<line x1="1838.4" y1="555" x2="1838.4" y2="1408.5"/>
<line x1="1576" y1="722.3" x2="2618" y2="722.3"/>
<line x1="2357.3" y1="555" x2="2357.3" y2="890"/>
<line x1="1576" y1="1149.7" x2="2098" y2="1149.7"/>
</g>
<g stroke="#e23b33" fill="none">
<line x1="2357.3" y1="1017" x2="2357.3" y2="1281.5" stroke-width="1.2" opacity="0.75"/>
<line x1="2161.7" y1="1162.2" x2="2553.8" y2="1137" stroke-width="1.4" opacity="0.6"/>
<line x1="2161.7" y1="1162.2" x2="2230" y2="1157.8" stroke-width="2.2"/>
<line x1="2515" y1="1139.5" x2="2553.8" y2="1137" stroke-width="2.2"/>
<line x1="2285.3" y1="1115.3" x2="2429.1" y2="1183.5" stroke-width="1.3" opacity="0.6"/>
<line x1="2395" y1="1167.5" x2="2429.1" y2="1183.5" stroke-width="2"/>
</g>
<text x="1838.4" y="580" text-anchor="middle" font-family="Liberation Sans, sans-serif" font-size="25" fill="#8c8c8c">S</text>
<text x="2357.3" y="580" text-anchor="middle" font-family="Liberation Sans, sans-serif" font-size="25" fill="#8c8c8c">S</text>
<text x="1580" y="731" font-family="Liberation Sans, sans-serif" font-size="25" fill="#8c8c8c">L</text>
<text x="2099" y="731" font-family="Liberation Sans, sans-serif" font-size="25" fill="#8c8c8c">P</text>
<text x="1838.4" y="915.5" text-anchor="middle" font-family="Liberation Sans, sans-serif" font-size="25" fill="#8c8c8c">A</text>
<text x="1580" y="1160" font-family="Liberation Sans, sans-serif" font-size="25" fill="#8c8c8c">L</text>
</g></svg>

<div class="a" style="left:107px;top:191px;width:60px;height:59px;border-radius:16px;border:1.5px solid #d5dae3;background:linear-gradient(180deg,#fdfdfe,#f3f5f9);"></div>
<div class="a" style="left:123px;top:211.29999999999998px;width:24px;height:2.8000000000000114px;border-radius:2px;background:#3a4d77;"></div>
<div class="a" style="left:123px;top:219.1px;width:24px;height:2.8000000000000114px;border-radius:2px;background:#3a4d77;"></div>
<div class="a" style="left:123px;top:226.9px;width:24px;height:2.8000000000000114px;border-radius:2px;background:#3a4d77;"></div>
<div class="t" style="left:187.5px;top:195.9px;font-size:48px;font-weight:bold;color:#121a2c;letter-spacing:-0.25px;">VoxLogicA</div>
<div class="a" style="left:2551.5px;top:198.5px;width:124.5px;height:45.0px;border-radius:23px;border:2px solid #d8dce3;background:linear-gradient(180deg,#fdfdfe,#f4f6fa);"></div>
<div class="t" style="left:2567.0px;top:211.0px;font-size:22px;color:#4a586f;letter-spacing:0.8px;-webkit-text-stroke:0.4px #4a586f;">v2.0.0a2</div>
<div class="a" style="left:2496.5px;top:341px;width:136.0px;height:45.5px;border-radius:23px;border:2px solid #abbef6;background:#f6f8fd;"></div>
<div class="t" style="left:2514.0px;top:355.0px;font-size:20px;font-weight:bold;color:#20396f;letter-spacing:1.1px;">Maximize</div>
<div class="a" style="left:1045px;top:463px;width:505px;height:1.5px;background:#e3e6ec;"></div>
<div class="a" style="left:1058px;top:410px;width:77px;height:42px;border-radius:21px;border:1.5px solid #e4e7ec;background:#f7f9fc;"></div>
<div class="t" style="left:1072.0px;top:421.8px;font-size:21px;font-weight:bold;color:#9ba2ad;letter-spacing:0.4px;">Prev</div>
<div class="t" style="left:1277.5px;top:421.0px;font-size:22px;color:#4a5872;letter-spacing:1.5px;-webkit-text-stroke:0.3px #4a5872;">1-3</div>
<div class="a" style="left:1460px;top:410px;width:77.5px;height:42px;border-radius:21px;border:1.5px solid #e4e7ec;background:#f7f9fc;"></div>
<div class="t" style="left:1473.5px;top:421.8px;font-size:21px;font-weight:bold;color:#9ba2ad;letter-spacing:0.4px;">Next</div>
<div class="a" style="left:1052px;top:471.5px;width:492px;height:153.5px;border-radius:21px;background:#d3ddfa;"></div>
<div class="a" style="left:1056px;top:475px;width:484px;height:146.5px;border-radius:17px;border:2.5px solid #5474e6;background:linear-gradient(180deg,#eef1fd,#edf0fb);"></div>
<div class="t" style="left:1071.0px;top:491.2px;font-size:20px;font-family:'Liberation Mono',monospace;font-weight:bold;color:#1f2a3d;">[0]</div>
<div class="a" style="left:1072px;top:520px;width:93px;height:31.5px;border-radius:15.75px;border:1.5px solid #9dd0ad;background:#dcf5e4;"></div>
<div class="t" style="left:1084.5px;top:527.5px;font-size:18px;font-weight:bold;color:#22603f;letter-spacing:0.8px;">READY</div>
<div class="t" style="left:1071.5px;top:562.7px;font-size:20px;font-family:'Liberation Mono',monospace;color:#5b667a;">240 x 240 x 155</div>
<div class="a" style="left:1056.5px;top:632px;width:483.5px;height:145.5px;border-radius:17px;border:1.5px solid #e5e8ee;background:linear-gradient(180deg,#fafbfd,#f8f9fc);"></div>
<div class="t" style="left:1071.0px;top:647.9px;font-size:20px;font-family:'Liberation Mono',monospace;font-weight:bold;color:#1f2a3d;">[1]</div>
<div class="a" style="left:1072px;top:677px;width:93px;height:31px;border-radius:15.5px;border:1.5px solid #9dd0ad;background:#dcf5e4;"></div>
<div class="t" style="left:1084.5px;top:684.2px;font-size:18px;font-weight:bold;color:#22603f;letter-spacing:0.8px;">READY</div>
<div class="t" style="left:1071.5px;top:719.2px;font-size:20px;font-family:'Liberation Mono',monospace;color:#5b667a;">240 x 240 x 155</div>
<div class="a" style="left:1056.5px;top:789px;width:483.5px;height:144.5px;border-radius:17px;border:1.5px solid #e5e8ee;background:linear-gradient(180deg,#fbfcfd,#f8f9fc);"></div>
<div class="t" style="left:1071.0px;top:804.7px;font-size:20px;font-family:'Liberation Mono',monospace;font-weight:bold;color:#465269;">[2]</div>
<div class="a" style="left:1072.5px;top:833.5px;width:125.0px;height:31.0px;border-radius:15.5px;border:1.5px solid #e7c48f;background:#fdf0dd;"></div>
<div class="t" style="left:1084.5px;top:840.8px;font-size:18px;font-weight:bold;color:#8a6a3d;letter-spacing:2.7px;">RUNNING</div>
<div class="a" style="left:1072px;top:871px;width:453px;height:51px;border-radius:11px;background:linear-gradient(90deg,#eef2f9,#eff3fa);"></div>
<div class="t" style="left:1071.0px;top:875.5px;font-size:20px;font-family:'Liberation Mono',monospace;color:#9aa3b3;">pending</div>
<div class="a" style="left:1565px;top:398px;width:1066px;height:61px;border-radius:19px 19px 0 0;background:#f3f6fc;"></div>
<div class="a" style="left:1565px;top:458.5px;width:1066px;height:1.5px;background:#e2e6ec;"></div>
<div class="t" style="left:1582.0px;top:419.4px;font-size:21px;font-family:'Liberation Mono',monospace;color:#3d5581;">[0]</div>
<div class="a" style="left:1634.5px;top:407.5px;width:108.0px;height:41.0px;border-radius:20.5px;border:1.5px solid #99d5ab;background:#e7f7ed;"></div>
<div class="t" style="left:1651.0px;top:419.1px;font-size:20px;font-weight:bold;color:#2f7a50;letter-spacing:0.95px;">READY</div>
<div class="a" style="left:2476.5px;top:403.5px;width:137.0px;height:50.0px;border-radius:23px;border:2px solid #abbef6;background:#f6f8fd;"></div>
<div class="t" style="left:2494.5px;top:419.1px;font-size:20px;font-weight:bold;color:#20396f;letter-spacing:1.1px;">Maximize</div>
<div class="t" style="left:1022.5px;top:1540.9px;font-size:29px;font-weight:bold;color:#111a2c;letter-spacing:0.9px;">pflair_images</div>
<div class="a" style="left:1023.6px;top:1597px;width:206.30000000000007px;height:41.59999999999991px;border-radius:20.799999999999955px;border:1.5px solid #dcdfe5;background:linear-gradient(180deg,#fdfdfe,#f8f9fc);"></div>
<div class="t" style="left:1039.1px;top:1610.1px;font-size:20.67px;font-family:'Liberation Mono',monospace;font-weight:bold;color:#1e293b;">dataset_root</div>
<div class="a" style="left:1196.9px;top:1608.3px;width:19.0px;height:19.0px;border-radius:50%;background:#98a2b3;border:2px solid #c9cfd9;"></div>
<div class="a" style="left:1240.5px;top:1597px;width:294.9000000000001px;height:41.59999999999991px;border-radius:20.799999999999955px;border:1.5px solid #dcdfe5;background:linear-gradient(180deg,#fdfdfe,#f8f9fc);"></div>
<div class="t" style="left:1256.0px;top:1610.1px;font-size:20.67px;font-family:'Liberation Mono',monospace;font-weight:bold;color:#1e293b;">dataset_slice_start</div>
<div class="a" style="left:1502.4px;top:1608.3px;width:19.0px;height:19.0px;border-radius:50%;background:#98a2b3;border:2px solid #c9cfd9;"></div>
<div class="a" style="left:1546.7px;top:1597px;width:281.29999999999995px;height:41.59999999999991px;border-radius:20.799999999999955px;border:1.5px solid #dcdfe5;background:linear-gradient(180deg,#fdfdfe,#f8f9fc);"></div>
<div class="t" style="left:1562.2px;top:1610.1px;font-size:20.67px;font-family:'Liberation Mono',monospace;font-weight:bold;color:#1e293b;">dataset_slice_stop</div>
<div class="a" style="left:1795.0px;top:1608.3px;width:19.0px;height:19.0px;border-radius:50%;background:#98a2b3;border:2px solid #c9cfd9;"></div>
<div class="a" style="left:1838.9px;top:1597px;width:132.0999999999999px;height:41.59999999999991px;border-radius:20.799999999999955px;border:1.5px solid #dcdfe5;background:linear-gradient(180deg,#fdfdfe,#f8f9fc);"></div>
<div class="t" style="left:1854.4px;top:1610.1px;font-size:20.67px;font-family:'Liberation Mono',monospace;font-weight:bold;color:#1e293b;">hi_thr</div>
<div class="a" style="left:1938.0px;top:1608.3px;width:19.0px;height:19.0px;border-radius:50%;background:#98a2b3;border:2px solid #c9cfd9;"></div>
<div class="a" style="left:1981.6px;top:1597px;width:132.4000000000001px;height:41.59999999999991px;border-radius:20.799999999999955px;border:1.5px solid #dcdfe5;background:linear-gradient(180deg,#fdfdfe,#f8f9fc);"></div>
<div class="t" style="left:1997.1px;top:1610.1px;font-size:20.67px;font-family:'Liberation Mono',monospace;font-weight:bold;color:#1e293b;">vi_thr</div>
<div class="a" style="left:2081.0px;top:1608.3px;width:19.0px;height:19.0px;border-radius:50%;background:#98a2b3;border:2px solid #c9cfd9;"></div>
<div class="a" style="left:2124.6px;top:1597px;width:244.5px;height:41.59999999999991px;border-radius:20.799999999999955px;border:1.5px solid #dcdfe5;background:linear-gradient(180deg,#fdfdfe,#f8f9fc);"></div>
<div class="t" style="left:2140.1px;top:1610.1px;font-size:20.67px;font-family:'Liberation Mono',monospace;font-weight:bold;color:#1e293b;">all_flair_paths</div>
<div class="a" style="left:2336.1px;top:1608.3px;width:19.0px;height:19.0px;border-radius:50%;background:#98a2b3;border:2px solid #c9cfd9;"></div>
<div class="a" style="left:2379.5px;top:1597px;width:194.5px;height:41.59999999999991px;border-radius:20.799999999999955px;border:1.5px solid #dcdfe5;background:linear-gradient(180deg,#fdfdfe,#f8f9fc);"></div>
<div class="t" style="left:2395.0px;top:1610.1px;font-size:20.67px;font-family:'Liberation Mono',monospace;font-weight:bold;color:#1e293b;">flair_paths</div>
<div class="a" style="left:2541.0px;top:1608.3px;width:19.0px;height:19.0px;border-radius:50%;background:#98a2b3;border:2px solid #c9cfd9;"></div>
<div class="a" style="left:1023.6px;top:1650px;width:206.30000000000007px;height:42.5px;border-radius:21.25px;border:1.5px solid #dcdfe5;background:linear-gradient(180deg,#fdfdfe,#f8f9fc);"></div>
<div class="t" style="left:1039.1px;top:1663.1px;font-size:20.67px;font-family:'Liberation Mono',monospace;font-weight:bold;color:#1e293b;">flair_images</div>
<div class="a" style="left:1196.9px;top:1661.75px;width:19.0px;height:19.0px;border-radius:50%;background:#98a2b3;border:2px solid #c9cfd9;"></div>
<div class="a" style="left:1236.5px;top:1646px;width:228.79999999999995px;height:50.5px;border-radius:25.25px;background:#d3ddfa;"></div>
<div class="a" style="left:1240.5px;top:1650px;width:220.79999999999995px;height:42.5px;border-radius:21.25px;border:2.5px solid #5474e6;background:#dee6fb;"></div>
<div class="t" style="left:1256.0px;top:1663.1px;font-size:20.67px;font-family:'Liberation Mono',monospace;font-weight:bold;color:#1e293b;">pflair_images</div>
<div class="a" style="left:1428.3px;top:1661.75px;width:19.0px;height:19.0px;border-radius:50%;background:#98a2b3;border:2px solid #c9cfd9;"></div>
<div class="a" style="left:1471.9px;top:1650px;width:219.29999999999995px;height:42.5px;border-radius:21.25px;border:1.5px solid #dcdfe5;background:linear-gradient(180deg,#fdfdfe,#f8f9fc);"></div>
<div class="t" style="left:1487.4px;top:1663.1px;font-size:20.67px;font-family:'Liberation Mono',monospace;font-weight:bold;color:#1e293b;">segmentations</div>
<div class="a" style="left:1658.2px;top:1661.75px;width:19.0px;height:19.0px;border-radius:50%;background:#98a2b3;border:2px solid #c9cfd9;"></div>
<div class="a" style="left:1023px;top:1713px;width:84.5px;height:42.5px;border-radius:22px;border:2px solid #a7baf4;background:linear-gradient(180deg,#f5f7fd,#e7eefa);"></div>
<div class="t" style="left:1038.5px;top:1726.0px;font-size:20px;font-weight:bold;color:#2c4a7f;letter-spacing:1px;">Code</div>
<div class="a" style="left:1122.5px;top:1713px;width:109.0px;height:42.5px;border-radius:22px;border:2px solid #a7baf4;background:linear-gradient(180deg,#f5f7fd,#e7eefa);"></div>
<div class="t" style="left:1137.5px;top:1726.0px;font-size:20px;font-weight:bold;color:#2c4a7f;letter-spacing:1px;">Results</div>
<div class="a" style="left:1245.5px;top:1705.5px;width:200.5px;height:57.5px;border-radius:22px;border:1.5px solid #dadee5;background:#fcfdfe;"></div>
<div class="t" style="left:1260.5px;top:1726.0px;font-size:20px;font-weight:bold;color:#4a5a72;letter-spacing:1px;">Operations</div>
<div class="a" style="left:1390.5px;top:1714.5px;width:40.5px;height:40.5px;border-radius:50%;background:#dfe7f9;"></div>
<div class="t" style="left:1404.5px;top:1724.9px;font-size:22px;font-weight:bold;color:#30508f;">2</div>
<div class="a" style="left:2384.5px;top:1723.5px;width:23.0px;height:23.0px;border-radius:50%;background:#4dae6e;border:2px solid #92d1a8;"></div>
<div class="a" style="left:2418.5px;top:1713.5px;width:70.0px;height:42.0px;border-radius:20px;background:linear-gradient(160deg,#68b9bd 0%,#5a9ad6 55%,#5b7bea 100%);border-top:1.5px solid #4d6fe0;box-shadow:0 10px 18px rgba(95,125,215,0.22);"></div>
<div class="t" style="left:2433.5px;top:1726.0px;font-size:20px;font-weight:bold;color:#ffffff;letter-spacing:0.8px;">Run</div>
<div class="a" style="left:2504px;top:1713.5px;width:153px;height:42.0px;border-radius:22px;border:1.5px solid #d9dde4;background:#ffffff;"></div>
<div class="t" style="left:2518.5px;top:1726.1px;font-size:20px;font-weight:bold;color:#4a5a72;letter-spacing:0.9px;">Panic Reset</div>
<svg class="a" style="left:0;top:0;" width="2784" height="200" viewBox="0 0 2784 200">
 <g fill="none" stroke="#6e6e6e" stroke-width="2.6" stroke-linecap="round" stroke-linejoin="round">
  <!-- sidebar icon -->
  <rect x="281.3" y="89.8" width="36.6" height="28.4" rx="6.5"/>
  <line x1="294.5" y1="90" x2="294.5" y2="118"/>
  <line x1="285.5" y1="96" x2="289.5" y2="96" stroke-width="2"/>
  <line x1="285.5" y1="100.6" x2="289.5" y2="100.6" stroke-width="2"/>
  <line x1="285.5" y1="105.2" x2="289.5" y2="105.2" stroke-width="2"/>
  <!-- chevron -->
  <polyline points="348.8,100 357,109.2 365.2,100"/>
  <!-- back / forward -->
  <polyline points="455,91 440.5,104 455,117"/>
  <polyline points="511,91 525.5,104 511,117"/>
 </g>
 <line x1="483" y1="84.5" x2="483" y2="123.5" stroke="#4e4e4e" stroke-width="1.6"/>
 <!-- reader icon -->
 <g fill="none" stroke="#d9d9d9" stroke-width="2.2" stroke-linecap="round">
  <rect x="877" y="91.6" width="21.2" height="12.6" rx="4"/>
  <line x1="877" y1="110.4" x2="898.2" y2="110.4"/>
  <line x1="877" y1="116.8" x2="891.5" y2="116.8"/>
 </g>
 <!-- translate icon -->
 <g>
  <path d="M1841.5 93 h16.5 a3.5 3.5 0 0 1 3.5 3.5 v9 a3.5 3.5 0 0 1 -3.5 3.5 h-10 l-4.5 4 v-4 h-2 a3.5 3.5 0 0 1 -3.5 -3.5 v-9 a3.5 3.5 0 0 1 3.5 -3.5 z" fill="none" stroke="#d9d9d9" stroke-width="1.8"/>
  <path d="M1845.5 106 l4.2 -10.5 l4.2 10.5 M1847.2 102.2 h5" fill="none" stroke="#d9d9d9" stroke-width="1.6"/>
  <path d="M1857.5 99.5 h15 a3.5 3.5 0 0 1 3.5 3.5 v9.5 a3.5 3.5 0 0 1 -3.5 3.5 h-1.5 v3.5 l-4.5 -3.5 h-9 a3.5 3.5 0 0 1 -3.5 -3.5 v-9.5 a3.5 3.5 0 0 1 3.5 -3.5 z" fill="#d9d9d9" stroke="#2a2a2a" stroke-width="1.2"/>
  <path d="M1860.5 104 h9 M1865 101.8 v2.2 M1862 104 q1.5 6 7 9 M1868 104 q-1.5 6 -7 9" fill="none" stroke="#2a2a2a" stroke-width="1.5"/>
 </g>
 <!-- reload -->
 <g fill="none" stroke="#d9d9d9" stroke-width="2.2" stroke-linecap="round" stroke-linejoin="round">
  <path d="M1905.5 97.2 A10.8 10.8 0 1 0 1910.8 106.5"/>
  <polyline points="1899.5,91.5 1905.8,97.2 1899.5,102.2"/>
 </g>
 <!-- right toolbar -->
 <g fill="none" stroke="#6e6e6e" stroke-width="2.6" stroke-linecap="round" stroke-linejoin="round">
  <circle cx="2439.6" cy="104.2" r="16"/>
  <line x1="2439.6" y1="95.5" x2="2439.6" y2="112"/>
  <polyline points="2432.8,105.6 2439.6,112.2 2446.4,105.6"/>
  <path d="M2502.5 97.2 h-2 a4 4 0 0 0 -4 4 v16.4 a4 4 0 0 0 4 4 h20.2 a4 4 0 0 0 4 -4 v-16.4 a4 4 0 0 0 -4 -4 h-2"/>
  <line x1="2510.6" y1="86" x2="2510.6" y2="108.2"/>
  <polyline points="2503.4,92.8 2510.6,85.8 2517.8,92.8"/>
  <line x1="2571.2" y1="104.2" x2="2598" y2="104.2"/>
  <line x1="2584.6" y1="90.8" x2="2584.6" y2="117.6"/>
  <rect x="2641.3" y="87.8" width="24" height="23.5" rx="5"/>
  <rect x="2649.8" y="95.8" width="24.2" height="24" rx="5" fill="#2a2a2a"/>
 </g>
</svg>

<svg class="a" style="left:1180px;top:1210px;" width="50" height="60" viewBox="1180 1210 50 60">
 <defs><filter id="csh" x="-50%" y="-50%" width="200%" height="200%"><feGaussianBlur stdDeviation="1.4"/></filter></defs>
 <path d="M1195.8,1223.8 L1195.8,1246.8 L1201.8,1242.8 L1205.8,1252.4 Q1207.6,1253.6 1209.8,1251.8 L1206.2,1242.2 L1213,1240.8 Z" fill="#000" stroke="#000" stroke-width="4.6" stroke-linejoin="round" opacity="0.3" filter="url(#csh)" transform="translate(0.6,1.8)"/>
 <path d="M1195.8,1223.8 L1195.8,1246.8 L1201.8,1242.8 L1205.8,1252.4 Q1207.6,1253.6 1209.8,1251.8 L1206.2,1242.2 L1213,1240.8 Z" fill="#fff" stroke="#fff" stroke-width="4.6" stroke-linejoin="round"/>
 <path d="M1195.8,1223.8 L1195.8,1246.8 L1201.8,1242.8 L1205.8,1252.4 Q1207.6,1253.6 1209.8,1251.8 L1206.2,1242.2 L1213,1240.8 Z" fill="#000" stroke="#000" stroke-width="0.6" stroke-linejoin="round"/>
</svg>

</div></div>
<div id="winborder"></div>
</body></html>
